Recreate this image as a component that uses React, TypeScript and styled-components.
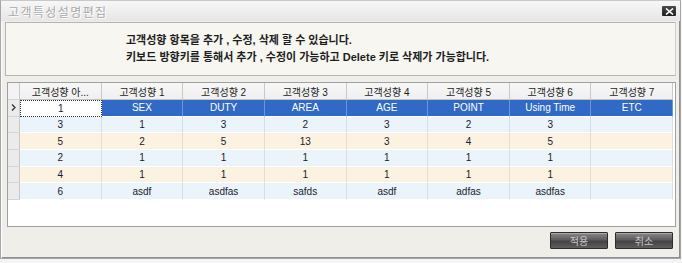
import styled, { createGlobalStyle, css } from "styled-components";

const GlobalStyle = createGlobalStyle`
  html, body {
    margin: 0;
    padding: 0;
    background: #f4f4f4;
  }
  body {
    font-family: "Liberation Sans", "Noto Sans CJK KR", sans-serif;
  }
`;

const headers = [
  "고객성향 아...",
  "고객성향 1",
  "고객성향 2",
  "고객성향 3",
  "고객성향 4",
  "고객성향 5",
  "고객성향 6",
  "고객성향 7",
];

const rows = [
  ["1", "SEX", "DUTY", "AREA", "AGE", "POINT", "Using Time", "ETC"],
  ["3", "1", "3", "2", "3", "2", "3", ""],
  ["5", "2", "5", "13", "3", "4", "5", ""],
  ["2", "1", "1", "1", "1", "1", "1", ""],
  ["4", "1", "1", "1", "1", "1", "1", ""],
  ["6", "asdf", "asdfas", "safds", "asdf", "adfas", "asdfas", ""],
];

type Tone = "selected" | "blue" | "beige";

function toneOf(index: number): Tone {
  if (index === 0) return "selected";
  return index % 2 === 1 ? "blue" : "beige";
}

export default function App() {
  return (
    <>
      <GlobalStyle />
      <Window>
        <TitleBar>
          <Title>고객특성설명편집</Title>
          <CloseButton aria-label="close">
            <svg width="9" height="7" viewBox="0 0 9 7">
              <path d="M1 0.5 L8 6.5 M8 0.5 L1 6.5" stroke="#fff" strokeWidth="1.6" />
            </svg>
          </CloseButton>
        </TitleBar>
        <Body>
          <InfoPanel>
            <InfoLine>고객성향 항목을 추가 , 수정, 삭제 할 수 있습니다.</InfoLine>
            <InfoLine>키보드 방향키를 통해서 추가 , 수정이 가능하고 Delete 키로 삭제가 가능합니다.</InfoLine>
          </InfoPanel>
          <GridBox>
            <Grid>
              <RowHead $header />
              {headers.map((h) => (
                <HeadCell key={h}>{h}</HeadCell>
              ))}
              {rows.map((row, r) => (
                <Row key={r} $tone={toneOf(r)}>
                  <RowHead>
                    {r === 0 && (
                      <svg width="5" height="7" viewBox="0 0 5 7">
                        <path d="M1 0.5 L4 3.5 L1 6.5" stroke="#333" strokeWidth="1.3" fill="none" />
                      </svg>
                    )}
                  </RowHead>
                  {row.map((value, c) => (
                    <Cell key={c} $focus={r === 0 && c === 0}>
                      {value}
                    </Cell>
                  ))}
                </Row>
              ))}
            </Grid>
          </GridBox>
          <Footer>
            <ActionButton>적용</ActionButton>
            <ActionButton>취소</ActionButton>
          </Footer>
        </Body>
      </Window>
    </>
  );
}

const Window = styled.div`
  box-sizing: border-box;
  width: 681px;
  height: 259px;
  display: flex;
  flex-direction: column;
  background: #efeee9;
  border: 1px solid #a6a6a6;
  border-top-color: #c8c8c8;
  box-shadow: inset 1px 0 0 #fdfdfd, inset -1px -1px 0 #8f8f8f;
`;

const TitleBar = styled.div`
  height: 20px;
  flex: none;
  display: flex;
  align-items: center;
  justify-content: space-between;
  padding: 0 4px 0 7px;
  background: linear-gradient(#f7f7f7, #e6e6e6);
`;

const Title = styled.span`
  font-family: "Noto Sans CJK KR", sans-serif;
  font-size: 12px;
  letter-spacing: 1.4px;
  color: #aaaaaa;
  text-shadow: 1px 1px 0 #ffffff;
`;

const CloseButton = styled.div`
  width: 14px;
  height: 10px;
  display: flex;
  align-items: center;
  justify-content: center;
  background: linear-gradient(#4a4a4a, #1f1f1f);
  border-radius: 1px;
`;

const Body = styled.div`
  flex: 1;
  display: flex;
  flex-direction: column;
  padding: 1px 4px 0 4px;
`;

const InfoPanel = styled.div`
  box-sizing: border-box;
  height: 54px;
  display: flex;
  flex-direction: column;
  justify-content: center;
  gap: 4px;
  padding: 0 0 0 120px;
  background: #f7f6f1;
  border: 1px solid #b4b4b4;
  border-right-color: #d0d0d0;
`;

const InfoLine = styled.div`
  font-family: "Liberation Sans", "Noto Sans CJK KR", sans-serif;
  font-size: 11px;
  font-weight: 700;
  line-height: 13px;
  color: #1e1e1e;
`;

const GridBox = styled.div`
  box-sizing: border-box;
  height: 145px;
  margin: 6px 0 0 2px;
  background: #ffffff;
  border: 1px solid #a0a0a0;
  overflow: hidden;
`;

const Grid = styled.div`
  display: grid;
  grid-template-columns: 12px repeat(8, 81.65px);
  grid-auto-rows: 16.67px;
  grid-template-rows: 17px;
  font-size: 10px;
`;

const Row = styled.div<{ $tone: Tone }>`
  display: contents;
  ${(p) =>
    p.$tone === "selected" &&
    css`
      --cell-bg: #3169c6;
      --cell-fg: #ffffff;
      --cell-line: #6f95d6;
    `}
  ${(p) =>
    p.$tone === "blue" &&
    css`
      --cell-bg: #ebf4fb;
      --cell-fg: #1a1a2e;
      --cell-line: #d8dde2;
    `}
  ${(p) =>
    p.$tone === "beige" &&
    css`
      --cell-bg: #fbf2e1;
      --cell-fg: #1a1a2e;
      --cell-line: #e2ddd3;
    `}
`;

const RowHead = styled.div<{ $header?: boolean }>`
  box-sizing: border-box;
  display: flex;
  align-items: center;
  justify-content: center;
  background: ${(p) => (p.$header ? "#f3f3f3" : "#ebebeb")};
  border-right: 1px solid #c9c9c9;
  border-bottom: 1px solid #d4d4d4;
`;

const HeadCell = styled.div`
  box-sizing: border-box;
  display: flex;
  align-items: center;
  justify-content: center;
  background: linear-gradient(#f7f7f7, #efefef);
  border-right: 1px solid #c9c9c9;
  border-bottom: 1px solid #c3c3c3;
  font-family: "Liberation Sans", "Noto Sans CJK KR", sans-serif;
  font-size: 10px;
  color: #1c1c1c;
  white-space: nowrap;
`;

const Cell = styled.div<{ $focus?: boolean }>`
  box-sizing: border-box;
  display: flex;
  align-items: center;
  justify-content: center;
  background: var(--cell-bg);
  color: var(--cell-fg);
  border-right: 1px solid var(--cell-line);
  border-bottom: 1px solid #ffffff;
  white-space: nowrap;
  ${(p) =>
    p.$focus &&
    css`
      background: #ffffff;
      color: #1a1a2e;
      border: 1px dotted #333333;
    `}
`;

const Footer = styled.div`
  flex: 1;
  display: flex;
  align-items: center;
  justify-content: flex-end;
  gap: 7px;
  padding: 0 3px 5px 0;
`;

const ActionButton = styled.div`
  box-sizing: border-box;
  width: 58px;
  height: 17px;
  display: flex;
  align-items: center;
  justify-content: center;
  font-family: "Noto Sans CJK KR", sans-serif;
  font-size: 10px;
  color: #c8c8c8;
  background: linear-gradient(#8a8a8a 0%, #5c5c5c 45%, #444444 55%, #5e5e5e 100%);
  border: 1px solid #2c2c2c;
  border-radius: 1px;
  box-shadow: inset 0 1px 0 #a8a8a8;
`;
